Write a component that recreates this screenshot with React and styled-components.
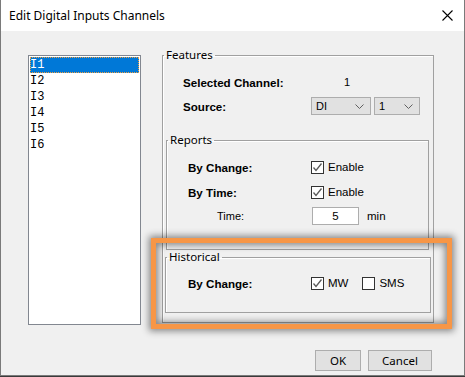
import React from 'react';
import styled, { createGlobalStyle } from 'styled-components';

const GlobalStyle = createGlobalStyle`
  html, body {
    margin: 0;
    padding: 0;
    background: #3a3a3a;
  }
  body {
    font-family: "Liberation Sans", Arial, sans-serif;
  }
`;

const Window = styled.div`
  position: relative;
  width: 463px;
  height: 375px;
  background: #f0f0f0;
  border: 1px solid #7a7a7a;
  border-top: none;
  display: flex;
  flex-direction: column;
`;

const TitleBar = styled.div`
  height: 31px;
  flex: none;
  background: #fff;
  display: flex;
  align-items: center;
  justify-content: space-between;
  padding: 0 11px 0 8px;
  font-family: "Noto Sans", "Open Sans", sans-serif;
  font-size: 12px;
  color: #000;
`;

const Client = styled.div`
  display: flex;
  flex-direction: column;
  padding: 17px 30px 0 27px;
`;

const Main = styled.div`
  display: flex;
  align-items: flex-start;
  gap: 21px;
`;

const ListBox = styled.div`
  box-sizing: border-box;
  margin-top: 7px;
  width: 113px;
  height: 270px;
  background: #fff;
  border: 1px solid #828790;
  padding: 1px 1px;
`;

const ListItem = styled.div`
  height: 16px;
  line-height: 16px;
  padding-left: 0;
  box-sizing: border-box;
  font-family: "Liberation Mono", "DejaVu Sans Mono", monospace;
  font-size: 12px;
  color: ${(p) => (p.$selected ? '#fff' : '#000')};
  background: ${(p) => (p.$selected ? '#0078d7' : 'transparent')};
  outline: ${(p) => (p.$selected ? '1px dotted #f0a040' : 'none')};
  outline-offset: -1px;
`;

const Group = styled.fieldset`
  box-sizing: border-box;
  margin: ${(p) => p.$margin || '0'};
  padding: ${(p) => p.$padding || '0'};
  border: 1px solid #a0a0a0;
  box-shadow: inset 1px 1px 0 #fff;
  width: ${(p) => p.$width}px;
  min-width: 0;
`;

const Legend = styled.legend`
  margin-left: 1px;
  padding: 0 2px;
  height: 14px;
  line-height: 14px;
  font-family: "Noto Sans", "Open Sans", sans-serif;
  font-size: 11.5px;
  color: #000;
`;

const Row = styled.div`
  display: flex;
  align-items: center;
  height: ${(p) => p.$height || 16}px;
  margin-top: ${(p) => p.$top || 0}px;
  padding-left: ${(p) => p.$indent}px;
`;

const Label = styled.div`
  width: ${(p) => p.$width}px;
  flex: none;
  font-size: ${(p) => (p.$plain ? '11px' : '11.6px')};
  font-weight: ${(p) => (p.$plain ? 'normal' : 'bold')};
  color: #000;
`;

const Value = styled.div`
  font-size: 11px;
  color: #000;
  padding-left: ${(p) => p.$pad || 0}px;
`;

const Combo = styled.div`
  box-sizing: border-box;
  width: ${(p) => p.$width}px;
  height: 18px;
  margin-right: 3px;
  background: #e1e1e1;
  border: 1px solid #adadad;
  display: flex;
  align-items: center;
  justify-content: space-between;
  padding: 0 6px 0 4px;
  font-size: 11px;
`;

const Check = styled.div`
  display: flex;
  align-items: center;
  gap: 4px;
  font-size: 11.5px;
  margin-right: ${(p) => p.$gap || 0}px;
`;

const Box = styled.span`
  box-sizing: border-box;
  width: 13px;
  height: 13px;
  background: #fff;
  border: 1px solid #333;
  display: flex;
  align-items: center;
  justify-content: center;
`;

const NumInput = styled.div`
  box-sizing: border-box;
  width: 47px;
  height: 18px;
  margin-left: 1px;
  background: #fff;
  border: 1px solid #adadad;
  display: flex;
  align-items: center;
  justify-content: center;
  font-size: 11.5px;
`;

const Unit = styled.span`
  font-size: 11.5px;
  margin-left: 8px;
`;

const Footer = styled.div`
  display: flex;
  justify-content: flex-end;
  gap: 7px;
  margin-top: 25px;
  padding-right: 2px;
`;

const Button = styled.div`
  box-sizing: border-box;
  width: ${(p) => p.$width}px;
  height: 21px;
  background: #e1e1e1;
  border: 1px solid #adadad;
  display: flex;
  align-items: center;
  justify-content: center;
  font-family: "Noto Sans", "Open Sans", sans-serif;
  font-size: 11.5px;
  color: #000;
`;

const Highlight = styled.div`
  position: absolute;
  left: 150px;
  top: 238px;
  width: 301px;
  height: 91px;
  box-sizing: border-box;
  border: 5px solid #f79646;
  box-shadow: 0 0 7px 2px rgba(0, 0, 0, 0.45), inset 0 0 7px 2px rgba(0, 0, 0, 0.45);
  pointer-events: none;
`;

const Chevron = () => (
  <svg width="9" height="5" viewBox="0 0 9 5">
    <path d="M0.5 0.5 L4.5 4.5 L8.5 0.5" fill="none" stroke="#606060" strokeWidth="1" />
  </svg>
);

const Tick = () => (
  <svg width="11" height="11" viewBox="0 0 11 11">
    <path d="M1.5 5.5 L4 8.5 L9.5 1.5" fill="none" stroke="#5a5a5a" strokeWidth="1.3" />
  </svg>
);

const CheckBox = ({ checked, label, gap }) => (
  <Check $gap={gap}>
    <Box>{checked && <Tick />}</Box>
    {label}
  </Check>
);

const channels = ['I1', 'I2', 'I3', 'I4', 'I5', 'I6'];

export default class App extends React.Component {
  render() {
    return (
      <Window>
        <GlobalStyle />
        <TitleBar>
          <span>Edit Digital Inputs Channels</span>
          <svg width="11" height="11" viewBox="0 0 11 11">
            <path d="M0.5 0.5 L10.5 10.5 M10.5 0.5 L0.5 10.5" stroke="#000" strokeWidth="1.1" />
          </svg>
        </TitleBar>
        <Client>
          <Main>
            <ListBox>
              {channels.map((c, i) => (
                <ListItem key={c} $selected={i === 0}>{c}</ListItem>
              ))}
            </ListBox>
            <Group $width={272} $padding="0 0 0 0">
              <Legend>Features</Legend>
              <Row $indent={20} $top={12}>
                <Label $width={128}>Selected Channel:</Label>
                <Value $pad={33}>1</Value>
              </Row>
              <Row $indent={20} $top={7} $height={18}>
                <Label $width={128}>Source:</Label>
                <Combo $width={60}>DI<Chevron /></Combo>
                <Combo $width={46}>1<Chevron /></Combo>
              </Row>
              <Group $width={263} $margin="18px 0 0 3px" $padding="0 0 24px 0">
                <Legend>Reports</Legend>
                <Row $indent={21} $top={12}>
                  <Label $width={123}>By Change:</Label>
                  <CheckBox checked label="Enable" />
                </Row>
                <Row $indent={21} $top={9}>
                  <Label $width={123}>By Time:</Label>
                  <CheckBox checked label="Enable" />
                </Row>
                <Row $indent={50} $top={7} $height={18}>
                  <Label $width={94} $plain>Time:</Label>
                  <NumInput>5</NumInput>
                  <Unit>min</Unit>
                </Row>
              </Group>
              <Group $width={266} $margin="0 0 9px 2px" $padding="0 0 21px 0">
                <Legend>Historical</Legend>
                <Row $indent={22} $top={11}>
                  <Label $width={123}>By Change:</Label>
                  <CheckBox checked label="MW" gap={14} />
                  <CheckBox label="SMS" />
                </Row>
              </Group>
            </Group>
          </Main>
          <Footer>
            <Button $width={46}>OK</Button>
            <Button $width={64}>Cancel</Button>
          </Footer>
        </Client>
        <Highlight />
      </Window>
    );
  }
}
